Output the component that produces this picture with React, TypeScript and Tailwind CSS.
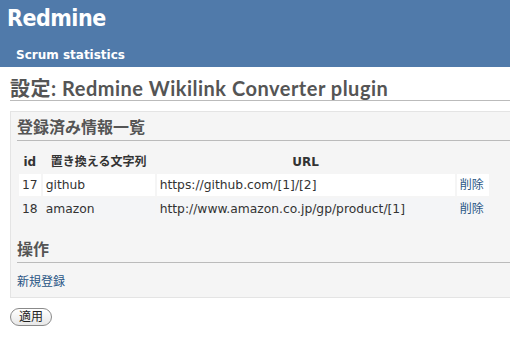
const sans = "font-['DejaVu_Sans','Noto_Sans_CJK_JP',sans-serif]";

const rows = [
  { id: 17, name: "github", url: "https://github.com/[1]/[2]" },
  { id: 18, name: "amazon", url: "http://www.amazon.co.jp/gp/product/[1]" },
];

export default function App() {
  return (
    <div className={`${sans} h-[343px] w-[510px] overflow-hidden bg-white text-[12px] text-[#333]`}>
      <header className="flex h-[67px] flex-col bg-[#507aaa] text-white">
        <h1 className="ml-[7px] mt-[4px] font-['DejaVu_Sans_Condensed','DejaVu_Sans',sans-serif] text-[23px] font-bold leading-[28px] tracking-[-0.5px]">
          Redmine
        </h1>
        <nav className="ml-[16px] mt-[15px] text-[12px] font-bold leading-[16px]">
          Scrum statistics
        </nav>
      </header>

      <div className="w-[540px] pl-[10px]">
        <h2 className="mt-[9px] border-b border-[#bbb] font-['Lato','Noto_Sans_CJK_JP',sans-serif] text-[20px] font-bold leading-[24px] tracking-[0.5px] text-[#555]">
          設定: Redmine Wikilink Converter plugin
        </h2>

        <div className="mt-[10px] border border-[#e4e4e4] bg-[#f5f5f5] pb-[7px] pl-[6px]">
          <h3 className="mt-[6px] border-b border-[#bbb] pb-[2px] text-[16px] font-bold leading-[20px] text-[#555]">
            登録済み情報一覧
          </h3>

          <table className="mt-[9px] border-separate border-spacing-[2px] text-[12.3px]">
            <thead>
              <tr className="h-[20px]">
                <th className="px-[4px] text-[12px] font-bold">id</th>
                <th className="w-[112px] px-[4px] text-[12px] font-bold">置き換える文字列</th>
                <th className="w-[298px] px-[4px] text-[12px] font-bold">URL</th>
                <th className="w-[32px]" />
              </tr>
            </thead>
            <tbody>
              {rows.map((r, i) => (
                <tr
                  key={r.id}
                  className={i % 2 === 0 ? "h-[22px] bg-white" : "h-[22px] bg-[#f4f5f7]"}
                >
                  <td className="px-[3px]">{r.id}</td>
                  <td className="px-[3px]">{r.name}</td>
                  <td className="px-[3px]">{r.url}</td>
                  <td className="px-[3px] text-[12px] text-[#2a5685]">削除</td>
                </tr>
              ))}
            </tbody>
          </table>

          <h3 className="mt-[18px] border-b border-[#bbb] pb-[2px] text-[16px] font-bold leading-[20px] text-[#555]">
            操作
          </h3>
          <p className="mt-[11px] leading-[16px] text-[#2a5685]">新規登録</p>
        </div>

        <button className="mt-[10px] h-[18px] rounded-full border border-[#8a8a8a] bg-gradient-to-b from-white to-[#e8e8e8] px-[8px] text-[12px] leading-[14px] text-[#222]">
          適用
        </button>
      </div>
    </div>
  );
}
